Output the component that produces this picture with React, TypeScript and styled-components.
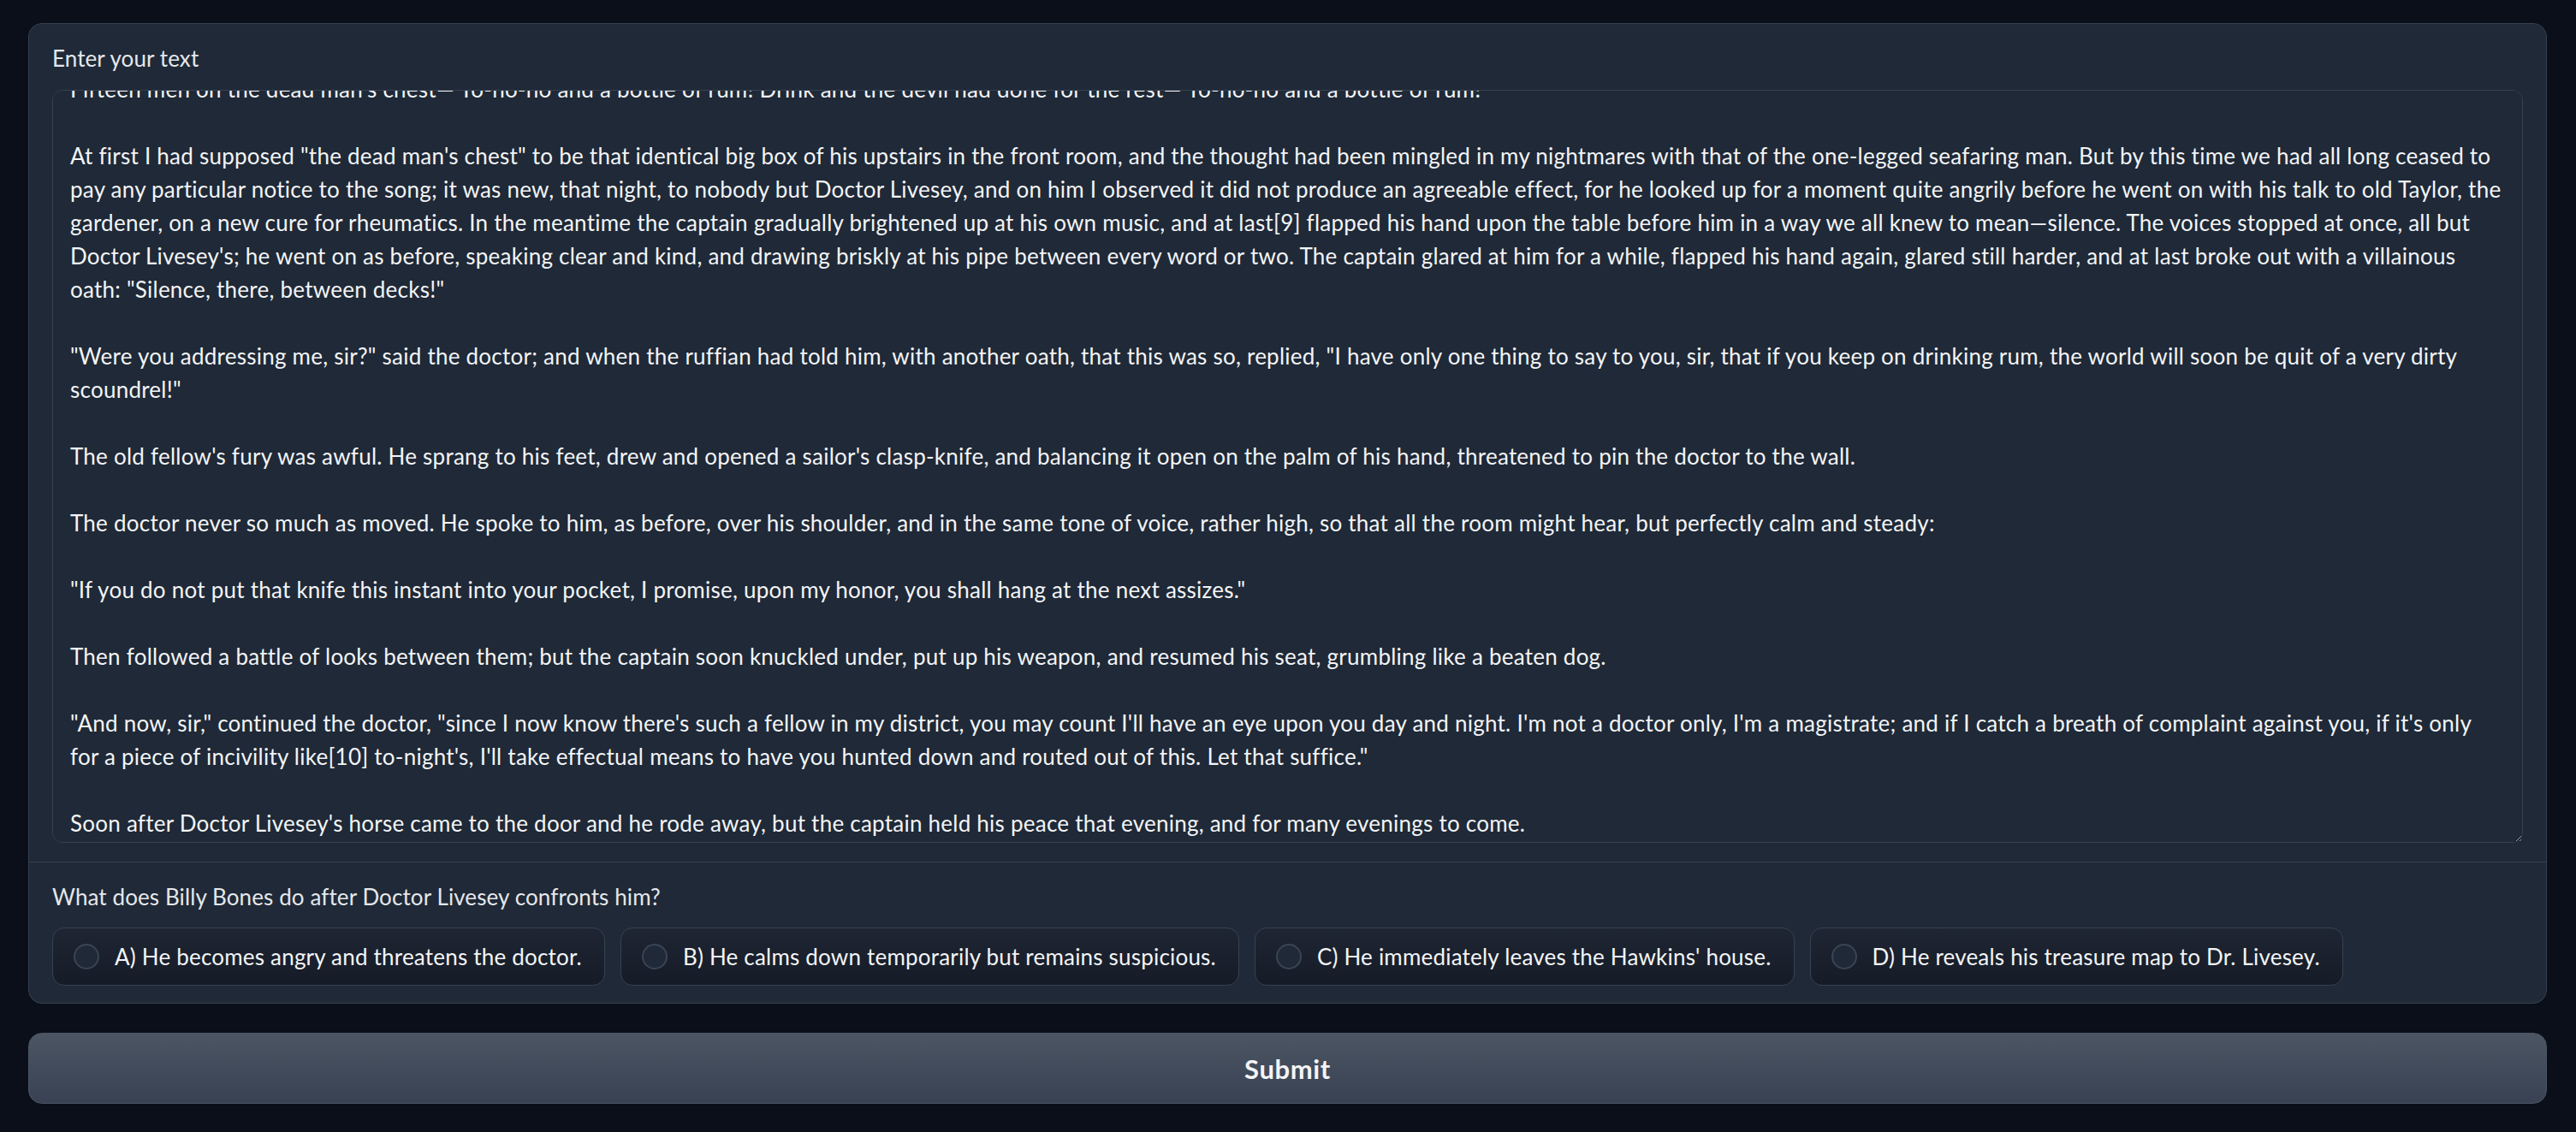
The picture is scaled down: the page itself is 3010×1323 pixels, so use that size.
import React, { useLayoutEffect, useRef } from "react";
import styled, { createGlobalStyle } from "styled-components";

const GlobalStyle = createGlobalStyle`
  html, body {
    margin: 0;
    padding: 0;
    background: #0b0f19;
    color-scheme: dark;
  }
  body {
    font-family: "Lato", "Source Sans Pro", "Noto Sans", sans-serif;
  }
`;

const Page = styled.div`
  min-height: 1323px;
  box-sizing: border-box;
  padding: 27px 34px 0 33px;
  display: flex;
  flex-direction: column;
  gap: 34px;
  font-family: "Lato", "Source Sans Pro", "Noto Sans", sans-serif;
`;

const Form = styled.form`
  display: flex;
  flex-direction: column;
  gap: 1px;
  background: #374151;
  border: 1px solid #374151;
  border-radius: 16px;
  overflow: hidden;
  margin: 0;
`;

const Block = styled.div<{ $pb: number }>`
  background: #1f2937;
  padding: 21px 27px ${(p) => p.$pb}px;
  display: flex;
  flex-direction: column;
`;

const Label = styled.span<{ $mb: number }>`
  display: block;
  font-size: 26px;
  line-height: 39px;
  color: #e5e7eb;
  letter-spacing: 0.1px;
  margin-bottom: ${(p) => p.$mb}px;
`;

const TextArea = styled.textarea`
  display: block;
  box-sizing: border-box;
  width: 100%;
  height: 880px;
  margin: 0;
  padding: 20px;
  background: #1f2937;
  border: 1px solid #374151;
  border-radius: 12px;
  color: #f3f4f6;
  font-family: inherit;
  font-size: 26px;
  line-height: 39px;
  letter-spacing: 0.24px;
  white-space: pre;
  overflow-x: hidden;
  overflow-y: auto;
  scrollbar-width: none;
  resize: vertical;
  outline: none;
  &::-webkit-scrollbar {
    display: none;
  }
`;

const Options = styled.div`
  display: flex;
  flex-wrap: wrap;
  gap: 18px;
`;

const Option = styled.label`
  display: inline-flex;
  align-items: center;
  gap: 18px;
  box-sizing: border-box;
  height: 68px;
  padding: 0 26px 0 24px;
  border: 1px solid #374151;
  border-radius: 14px;
  background: linear-gradient(to bottom, #1f2633, #151b27);
  color: #f3f4f6;
  font-size: 26px;
  letter-spacing: 0.2px;
  cursor: pointer;
`;

const RadioDot = styled.input.attrs({ type: "radio" })`
  appearance: none;
  -webkit-appearance: none;
  margin: 0;
  width: 30px;
  height: 30px;
  box-sizing: border-box;
  border-radius: 50%;
  border: 2px solid #3b4454;
  background: #1f2937;
  flex: none;
`;

const SubmitButton = styled.button`
  height: 83px;
  border: 1px solid #4b5563;
  border-radius: 16px;
  background: linear-gradient(to bottom, #4b5563, #394253);
  color: #f3f4f6;
  font-family: inherit;
  font-size: 31px;
  font-weight: 700;
  letter-spacing: 0.6px;
  cursor: pointer;
`;

const lines = [
  "Fifteen men on the dead man's chest— Yo-ho-ho and a bottle of rum! Drink and the devil had done for the rest— Yo-ho-ho and a bottle of rum!",
  "",
  'At first I had supposed "the dead man\'s chest" to be that identical big box of his upstairs in the front room, and the thought had been mingled in my nightmares with that of the one-legged seafaring man. But by this time we had all long ceased to',
  "pay any particular notice to the song; it was new, that night, to nobody but Doctor Livesey, and on him I observed it did not produce an agreeable effect, for he looked up for a moment quite angrily before he went on with his talk to old Taylor, the",
  "gardener, on a new cure for rheumatics. In the meantime the captain gradually brightened up at his own music, and at last[9] flapped his hand upon the table before him in a way we all knew to mean—silence. The voices stopped at once, all but",
  "Doctor Livesey's; he went on as before, speaking clear and kind, and drawing briskly at his pipe between every word or two. The captain glared at him for a while, flapped his hand again, glared still harder, and at last broke out with a villainous",
  'oath: "Silence, there, between decks!"',
  "",
  '"Were you addressing me, sir?" said the doctor; and when the ruffian had told him, with another oath, that this was so, replied, "I have only one thing to say to you, sir, that if you keep on drinking rum, the world will soon be quit of a very dirty',
  'scoundrel!"',
  "",
  "The old fellow's fury was awful. He sprang to his feet, drew and opened a sailor's clasp-knife, and balancing it open on the palm of his hand, threatened to pin the doctor to the wall.",
  "",
  "The doctor never so much as moved. He spoke to him, as before, over his shoulder, and in the same tone of voice, rather high, so that all the room might hear, but perfectly calm and steady:",
  "",
  '"If you do not put that knife this instant into your pocket, I promise, upon my honor, you shall hang at the next assizes."',
  "",
  "Then followed a battle of looks between them; but the captain soon knuckled under, put up his weapon, and resumed his seat, grumbling like a beaten dog.",
  "",
  '"And now, sir," continued the doctor, "since I now know there\'s such a fellow in my district, you may count I\'ll have an eye upon you day and night. I\'m not a doctor only, I\'m a magistrate; and if I catch a breath of complaint against you, if it\'s only',
  "for a piece of incivility like[10] to-night's, I'll take effectual means to have you hunted down and routed out of this. Let that suffice.\"",
  "",
  "Soon after Doctor Livesey's horse came to the door and he rode away, but the captain held his peace that evening, and for many evenings to come.",
];

const answers = [
  "A) He becomes angry and threatens the doctor.",
  "B) He calms down temporarily but remains suspicious.",
  "C) He immediately leaves the Hawkins' house.",
  "D) He reveals his treasure map to Dr. Livesey.",
];

export default function App() {
  const areaRef = useRef<HTMLTextAreaElement>(null);

  useLayoutEffect(() => {
    const el = areaRef.current;
    if (el) el.scrollTop = 41;
  }, []);

  return (
    <>
      <GlobalStyle />
      <Page>
        <Form onSubmit={(e) => e.preventDefault()}>
          <Block $pb={22}>
            <Label $mb={17}>Enter your text</Label>
            <TextArea ref={areaRef} wrap="off" defaultValue={lines.join("\n")} />
          </Block>
          <Block $pb={20}>
            <Label $mb={16}>What does Billy Bones do after Doctor Livesey confronts him?</Label>
            <Options>
              {answers.map((a) => (
                <Option key={a}>
                  <RadioDot name="answer" value={a} />
                  <span>{a}</span>
                </Option>
              ))}
            </Options>
          </Block>
        </Form>
        <SubmitButton type="button">Submit</SubmitButton>
      </Page>
    </>
  );
}
